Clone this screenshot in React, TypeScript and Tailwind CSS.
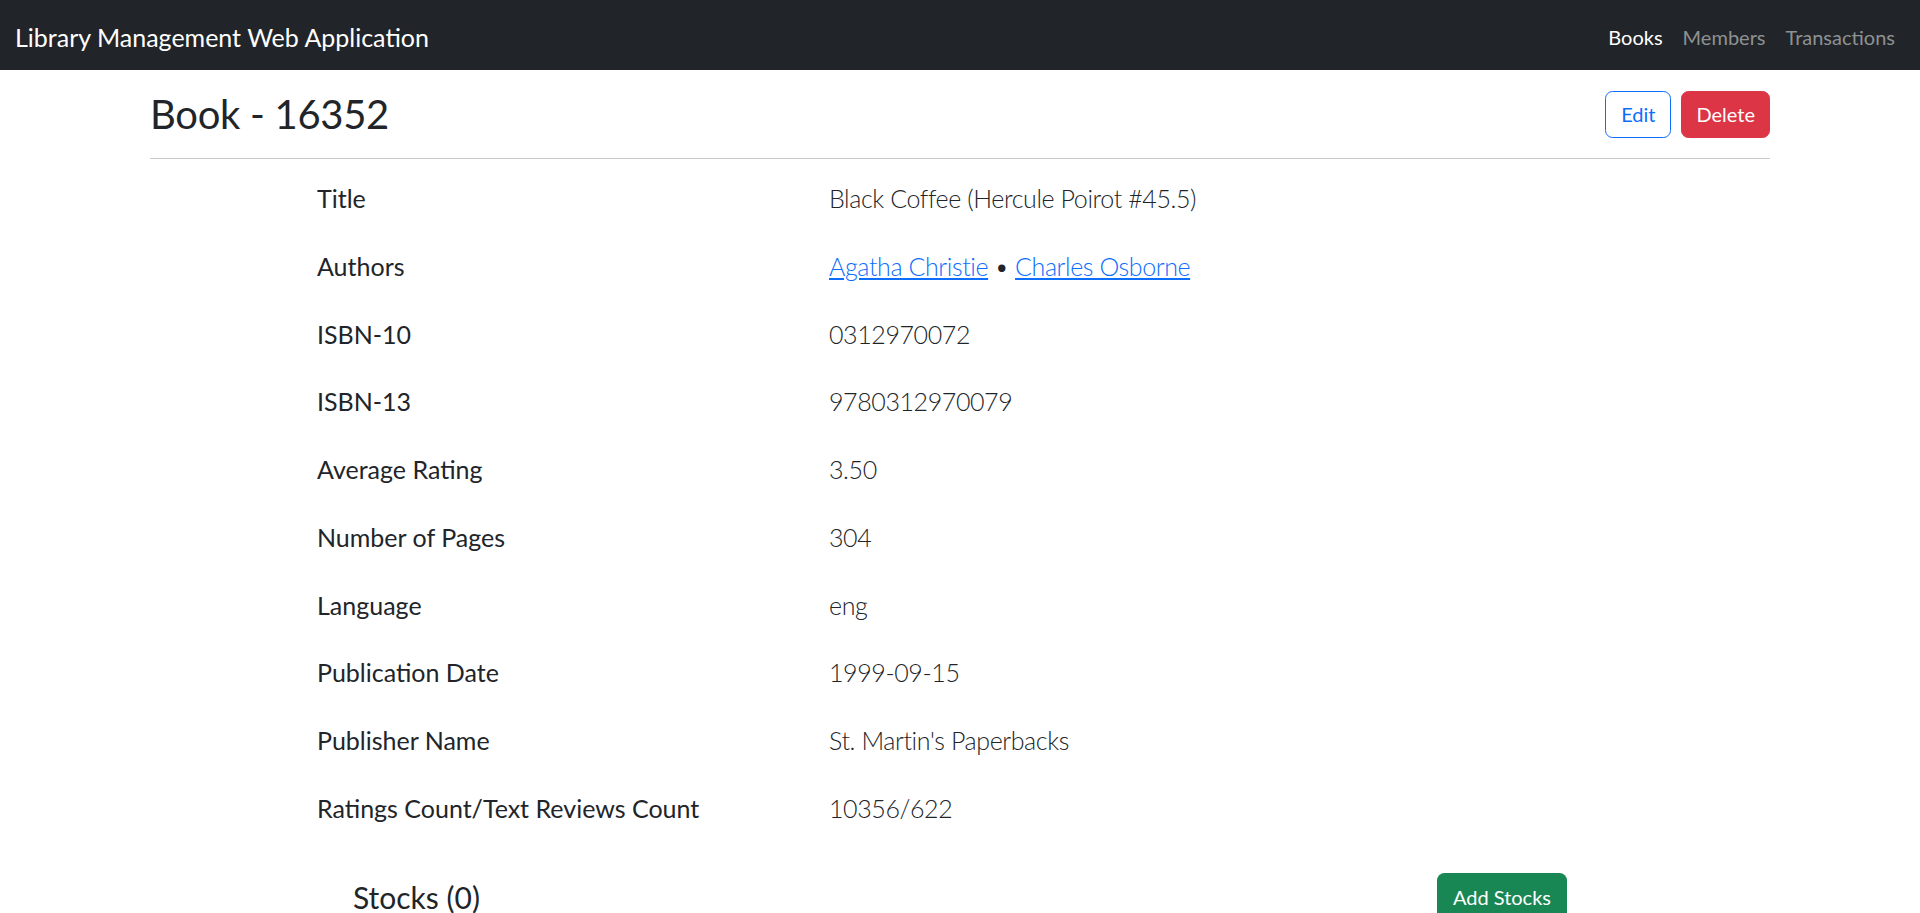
import React from "react";

const details: { label: string; value: React.ReactNode }[] = [
  { label: "Title", value: "Black Coffee (Hercule Poirot #45.5)" },
  {
    label: "Authors",
    value: (
      <>
        <a href="#" className="text-[#0d6efd] underline">
          Agatha Christie
        </a>
        {" • "}
        <a href="#" className="text-[#0d6efd] underline">
          Charles Osborne
        </a>
      </>
    ),
  },
  { label: "ISBN-10", value: "0312970072" },
  { label: "ISBN-13", value: "9780312970079" },
  { label: "Average Rating", value: "3.50" },
  { label: "Number of Pages", value: "304" },
  { label: "Language", value: "eng" },
  { label: "Publication Date", value: "1999-09-15" },
  { label: "Publisher Name", value: "St. Martin's Paperbacks" },
  { label: "Ratings Count/Text Reviews Count", value: "10356/622" },
];

const App = () => {
  return (
    <div className="min-h-screen bg-white text-[#212529] font-['Lato','Segoe_UI',sans-serif]">
      {/* navbar */}
      <nav className="bg-[#212529] h-[70px] flex items-center justify-between px-[15px]">
        <a href="#" className="text-white text-[25px] leading-[37.5px] pt-[5px]">
          Library Management Web Application
        </a>
        <ul className="flex text-[20px] leading-[30px] pt-[3px]">
          <li className="px-[10px] text-white">Books</li>
          <li className="px-[10px] text-[#8f9193]">Members</li>
          <li className="px-[10px] text-[#8f9193]">Transactions</li>
        </ul>
      </nav>

      <div className="w-[1620px] mx-auto">
        <div className="flex items-center justify-between pt-[20px]">
          <h2 className="text-[40px] leading-[48px] tracking-[-0.3px]">Book - 16352</h2>
          <div className="flex gap-[10px]">
            <button className="border border-[#0d6efd] text-[#0d6efd] rounded-[7.5px] text-[20px] leading-[30px] px-[15px] py-[7.5px]">
              Edit
            </button>
            <button className="border border-[#dc3545] bg-[#dc3545] text-white rounded-[7.5px] text-[20px] leading-[30px] px-[14px] py-[7.5px]">
              Delete
            </button>
          </div>
        </div>
        <hr className="mt-[20px] mb-[20px] border-t border-[#c8c9ca]" />
      </div>

      <div className="pl-[317px] pt-[1px] grid grid-cols-[512px_1fr] gap-y-[30.25px] text-[25px] leading-[37.5px]">
        {details.map((d) => (
          <React.Fragment key={d.label}>
            <div>{d.label}</div>
            <div className="font-light tracking-[-0.4px]">{d.value}</div>
          </React.Fragment>
        ))}
      </div>

      <div className="w-[1214px] mx-auto mt-[46px] flex items-center justify-between">
        <h4 className="text-[30px] leading-[36px]">Stocks (0)</h4>
        <button className="bg-[#198754] text-white rounded-[7.5px] text-[20px] leading-[30px] px-[16px] py-[8.5px]">
          Add Stocks
        </button>
      </div>
    </div>
  );
};

export default App;
